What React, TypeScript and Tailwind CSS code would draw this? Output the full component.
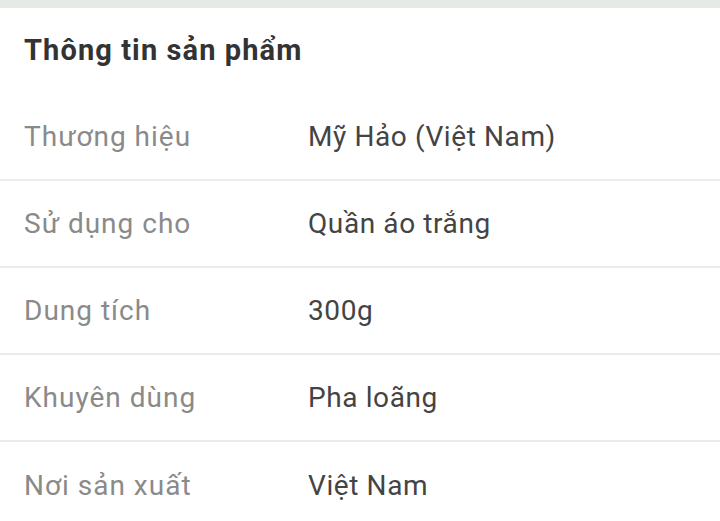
import React from "react";

const rows = [
  { label: "Thương hiệu", value: "Mỹ Hảo (Việt Nam)" },
  { label: "Sử dụng cho", value: "Quần áo trắng" },
  { label: "Dung tích", value: "300g" },
  { label: "Khuyên dùng", value: "Pha loãng" },
  { label: "Nơi sản xuất", value: "Việt Nam" },
];

export default function App() {
  return (
    <div className="w-[720px] h-[521px] overflow-hidden bg-white font-['Roboto',sans-serif]">
      <div className="h-[8px] bg-[#e5eae7]" />
      <div className="h-[86px] flex items-center px-6">
        <h2 className="text-[29px] font-bold text-[#333333] tracking-[1.1px]">
          Thông tin sản phẩm
        </h2>
      </div>
      {rows.map((r, i) => (
        <div
          key={r.label}
          className={`h-[87px] flex items-center px-6 ${
            i < rows.length - 1 ? "border-b-2 border-[#e7ede9]" : ""
          }`}
        >
          <span className="w-[284px] text-[28px] tracking-[1px] text-[#8a8a8a]">
            {r.label}
          </span>
          <span className="text-[28px] tracking-[0.6px] text-[#444444]">{r.value}</span>
        </div>
      ))}
    </div>
  );
}
